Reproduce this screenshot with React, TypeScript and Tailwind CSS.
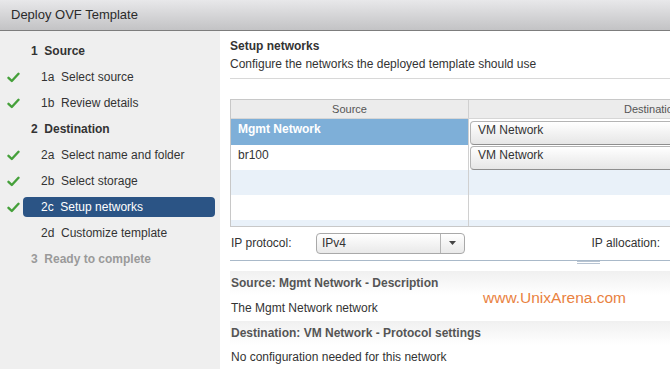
const steps = [
  { label: "1  Source", kind: "head" },
  { label: "1a  Select source", kind: "sub", done: true },
  { label: "1b  Review details", kind: "sub", done: true },
  { label: "2  Destination", kind: "head" },
  { label: "2a  Select name and folder", kind: "sub", done: true },
  { label: "2b  Select storage", kind: "sub", done: true },
  { label: "2c  Setup networks", kind: "sub", done: true, active: true },
  { label: "2d  Customize template", kind: "sub" },
  { label: "3  Ready to complete", kind: "off" },
];

function Check() {
  return (
    <svg width="13" height="11" viewBox="0 0 13 11" className="shrink-0">
      <path d="M1.5 5.8 L4.8 9 L11.5 1.8" stroke="#45a03a" strokeWidth="2.4" fill="none" strokeLinecap="round" strokeLinejoin="round" />
    </svg>
  );
}

function RowSelect({ value }: { value: string }) {
  return (
    <div className="h-[24px] ml-px pl-[7px] pt-[1px] leading-[14px] rounded-l-[4px] border border-[#b4b4b4] border-b-[#8e8e8e] bg-gradient-to-b from-white to-[#e6e6e6] text-[#333]">
      {value}
    </div>
  );
}

export default function App() {
  return (
    <div className="w-[670px] h-[369px] overflow-hidden flex flex-col bg-white text-[12px] text-[#333]" style={{ fontFamily: '"Liberation Sans", Arial, sans-serif' }}>
      {/* title bar */}
      <div className="h-[31px] shrink-0 flex items-center pl-[11px] border-b border-[#7d7d7d] bg-gradient-to-b from-[#e8e8ea] to-[#c3c3c5] text-[13px] text-[#2b2b2b]">
        Deploy OVF Template
      </div>

      <div className="flex flex-1 min-h-0">
        {/* wizard steps */}
        <div className="w-[220px] shrink-0 bg-[#efefef] pt-[7px]">
          {steps.map((s) => (
            <div key={s.label} className="h-[26px] flex items-center">
              <div className="w-[23px] flex justify-center pl-[3px]">{s.done && <Check />}</div>
              <div
                className={
                  s.active
                    ? "w-[192px] h-[20px] flex items-center pl-[18px] rounded-[4px] bg-[#2b5485] text-white"
                    : s.kind === "sub"
                    ? "pl-[18px]"
                    : s.kind === "head"
                    ? "pl-[8px] font-bold text-[#333]"
                    : "pl-[8px] font-bold text-[#9a9a9a]"
                }
              >
                <span className="whitespace-pre">{s.label}</span>
              </div>
            </div>
          ))}
        </div>

        {/* content */}
        <div className="flex-1 min-w-0 overflow-hidden pl-[10px] pt-[8px]">
          <div className="font-bold leading-[14px]">Setup networks</div>
          <div className="mt-[4px] leading-[14px]">Configure the networks the deployed template should use</div>
          <div className="mt-[7px] border-t border-[#d8d8d8]" />

          {/* network table */}
          <div className="mt-[20px] w-[500px] border-l border-t border-[#c8c8c8]">
            <div className="grid grid-cols-[238px_1fr] h-[19px] bg-[#ececec] text-[11px] text-[#555] border-b border-[#d6d6d6]">
              <div className="flex items-center justify-center border-r border-[#d0d0d0]">Source</div>
              <div className="flex items-center pl-[155px] whitespace-nowrap">Destination</div>
            </div>
            <div className="grid grid-cols-[238px_1fr]">
              <div className="h-[26px] bg-[#7eafd8] text-white font-bold pl-[7px] pt-[3px] leading-[14px] border-r border-[#d0d0d0]">Mgmt Network</div>
              <div className="h-[26px] pt-[2px]"><RowSelect value="VM Network" /></div>
              <div className="h-[25px] bg-white pl-[7px] pt-[3px] leading-[14px] border-r border-[#d0d0d0]">br100</div>
              <div className="h-[25px] pt-px"><RowSelect value="VM Network" /></div>
              <div className="h-[25px] bg-[#e9f1f9] border-r border-[#d0d0d0]" />
              <div className="h-[25px] bg-[#e9f1f9]" />
              <div className="h-[25px] bg-white border-r border-[#d0d0d0]" />
              <div className="h-[25px] bg-white" />
              <div className="h-[6px] bg-[#e9f1f9] border-r border-[#d0d0d0]" />
              <div className="h-[6px] bg-[#e9f1f9]" />
            </div>
            <div className="border-t border-[#c8c8c8]" />
          </div>

          {/* ip protocol */}
          <div className="h-[30px] flex items-center mt-[1px] pr-[10px]">
            <span className="w-[86px] pl-px">IP protocol:</span>
            <div className="w-[149px] h-[21px] flex rounded-[4px] border border-[#a9a9a9] bg-gradient-to-b from-white to-[#e9e9e9]">
              <span className="flex-1 flex items-center pl-[5px] border-r border-[#b4b4b4]">IPv4</span>
              <span className="w-[23px] flex items-center justify-center">
                <svg width="7" height="4" viewBox="0 0 7 4"><path d="M0 0h7L3.5 4z" fill="#444" /></svg>
              </span>
            </div>
            <span className="ml-auto">IP allocation:</span>
          </div>

          {/* splitter */}
          <div className="mt-[2px] border-t border-[#a9b9c9] w-[500px]" />
          <div className="flex justify-end pr-[70px] h-[10px]">
            <div className="w-[23px] h-[3px] border-t border-b border-[#b8c4d2]" />
          </div>

          {/* description */}
          <div className="relative w-[500px]">
            <div className="h-[24px] flex items-center font-bold text-[#555] bg-gradient-to-b from-[#f0f0f0] to-white pl-px">
              Source: Mgmt Network - Description
            </div>
            <div className="h-[26px] flex items-center pl-px">The Mgmt Network network</div>
            <div className="h-[24px] flex items-center font-bold text-[#555] bg-gradient-to-b from-[#f0f0f0] to-white pl-px">
              Destination: VM Network - Protocol settings
            </div>
            <div className="h-[24px] flex items-center pl-px">No configuration needed for this network</div>
            <div className="absolute left-[253px] top-[15px] text-[15.5px] text-[#e9823f]">www.UnixArena.com</div>
          </div>
        </div>
      </div>
    </div>
  );
}
